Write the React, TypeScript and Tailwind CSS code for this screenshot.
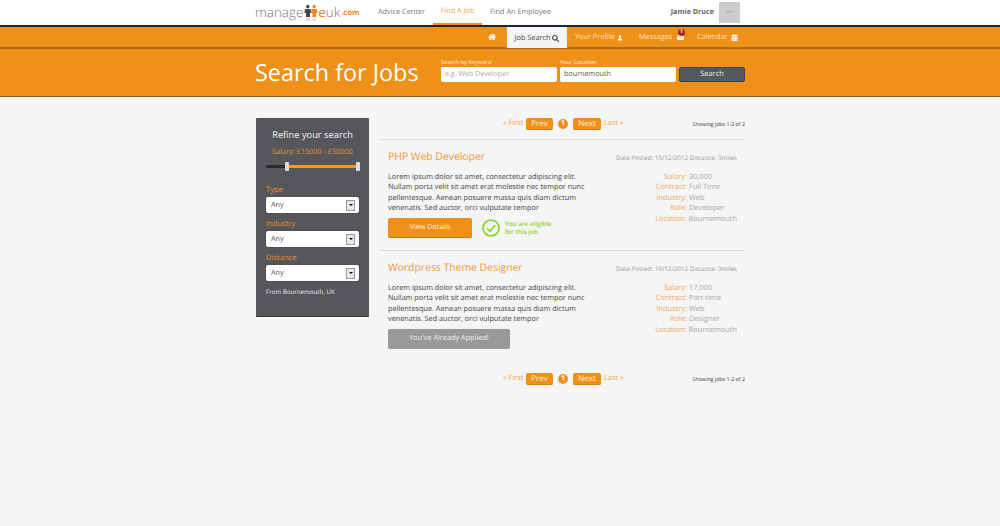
import React from "react";
import { FaHome, FaSearch, FaUser, FaCalendarAlt } from "react-icons/fa";

function Pager({ className }: { className: string }) {
  return (
    <div className={`relative flex h-[16px] items-center ${className}`}>
      <div className="ml-[123px] flex items-center">
        <span className="w-[20px] -translate-y-[0.5px] whitespace-nowrap text-[7.4px] text-[#f0a040]">« First</span>
        <span className="ml-[3px] flex h-[12px] w-[27px] items-center justify-center rounded-[2px] border-b border-[#d97c10] bg-[#f0901a] text-[8px] text-[#fff0dc]">Prev</span>
        <span className="ml-[5px] flex h-[10px] w-[10px] items-center justify-center rounded-full bg-[#f0901a] text-[7px] font-bold text-white">1</span>
        <span className="ml-[5px] flex h-[12px] w-[28px] items-center justify-center rounded-[2px] border-b border-[#d97c10] bg-[#f0901a] text-[8px] text-[#fff0dc]">Next</span>
        <span className="ml-[3px] -translate-y-[0.5px] whitespace-nowrap text-[7.4px] text-[#f0a040]">Last »</span>
      </div>
      <span className="absolute right-0 top-[4.5px] text-[5.3px] text-[#333]">Showing jobs 1-2 of 2</span>
    </div>
  );
}

function Sel({ label }: { label: string }) {
  return (
    <div>
      <div className="h-[14px] text-[7.6px] leading-[17px] text-[#e8902c]">{label}</div>
      <div className="mt-[1px] flex h-[16px] items-center justify-between rounded-[2px] bg-white pl-[5px] pr-[4px] shadow-[0_0_1px_#222]">
        <span className="text-[7.3px] text-[#555]">Any</span>
        <span className="flex h-[11px] w-[9px] items-center justify-center border border-[#999] bg-[#e8e8e8]">
          <span className="h-0 w-0 border-x-[2px] border-t-[2px] border-x-transparent border-t-black" />
        </span>
      </div>
    </div>
  );
}

function Job({ title, salary, contract, role, action }: { title: string; salary: string; contract: string; role: string; action: React.ReactNode }) {
  const rows = [["Salary:", salary], ["Contract:", contract], ["Industry:", "Web"], ["Role:", role], ["Location:", "Bournemouth"]];
  return (
    <div className="h-[111px] border-t border-[#dedede] px-[8px] pt-[10px]">
      <div className="flex items-center justify-between">
        <span className="text-[10.4px] leading-[15px] text-[#f0963a]">{title}</span>
        <span className="text-[6.25px] text-[#999]">Date Posted: 10/12/2012 Distance: 3miles</span>
      </div>
      <div className="mt-[7px] flex justify-between">
        <div className="w-[210px]">
          <p className="whitespace-nowrap text-[7.3px] leading-[10.45px] text-[#444]">
            Lorem ipsum dolor sit amet, consectetur adipiscing elit.<br />Nullam porta velit sit amet erat molestie nec tempor nunc<br />pellentesque. Aenean posuere massa quis diam dictum<br />venenatis. Sed auctor, orci vulputate tempor
          </p>
          <div className="mt-[4px]">{action}</div>
        </div>
        <div className="w-[120px] shrink-0">
          {rows.map(([k, v]) => (
            <div key={k} className="flex h-[10.45px] items-center text-[7.4px] leading-[10.45px]">
              <span className="mr-[2px] w-[70px] text-right text-[#f0a860]">{k}</span>
              <span className="text-[#aaa]">{v}</span>
            </div>
          ))}
        </div>
      </div>
    </div>
  );
}

export default function App() {
  return (
    <div className="min-h-[526px] bg-[#f5f5f5] [text-rendering:geometricPrecision]" style={{ fontFamily: `"Open Sans", sans-serif` }}>
      <header className="bg-white">
        <div className="mx-auto flex h-[25px] w-[490px] items-center">
          <div className="flex w-[106px] shrink-0 items-center text-[13.4px] font-light leading-none text-[#777]">
            manage
            <svg width="14" height="17" viewBox="0 0 14 17" className="ml-[1px] shrink-0">
              <circle cx="3.8" cy="2.5" r="1.7" fill="#444" />
              <path d="M1 5h5.5l0.5 4H6v4H2V9H0.5z" fill="#444" />
              <circle cx="10.2" cy="2.5" r="1.7" fill="#e8861a" />
              <path d="M7.5 5H13l0.5 4H12v4H8.5V9H7z" fill="#e8861a" />
              <path d="M2 14h4v3H2zM8.5 14H12v3H8.5z" fill="#ddd" />
            </svg>
            <span className="font-normal text-[#e8861a]">e</span>
            <span>uk</span>
            <span className="ml-[1px] mt-[2px] text-[7.6px] font-bold text-[#e8861a]">.com</span>
          </div>
          <nav className="ml-[17px] flex items-center whitespace-nowrap text-[7.3px]">
            <span className="w-[55px] text-[#777]">Advice Center</span>
            <span className="flex h-[25px] w-[49px] items-center justify-center border-b-2 border-[#ef9019] text-[#f0a860]">Find A Job</span>
            <span className="ml-[8px] text-[#777]">Find An Employee</span>
          </nav>
          <div className="ml-auto flex items-center">
            <span className="text-[7.2px] font-bold text-[#666]">Jamie Druce</span>
            <div className="ml-[5px] mr-[5px] flex h-[21px] w-[21px] items-center justify-center bg-[#ccc] text-[4px] text-[#999]">N/A</div>
          </div>
        </div>
      </header>
      <div className="h-[2px] bg-[#1d2430]" />
      <div className="h-[22px] border-b-2 border-[#b06f1c] bg-[#ef9019]">
        <div className="mx-auto flex h-[20px] w-[490px] items-center whitespace-nowrap pl-[233px] text-[7.3px] text-[#ffe3bf]">
          <FaHome size={8} color="white" className="shrink-0" />
          <span className="ml-[11px] flex h-[21px] w-[60px] shrink-0 items-center justify-center gap-[2px] self-start bg-[#f5f5f5] pt-[1px] text-[#444]">Job Search <FaSearch size={7} /></span>
          <span className="ml-[8px] flex w-[47px] shrink-0 items-center gap-[3px] pt-[1px]">Your Profile <FaUser size={6} color="white" /></span>
          <span className="relative ml-[17px] flex w-[46px] shrink-0 items-center gap-[5px] pt-[1px]">Messages
            <svg width="7" height="5" viewBox="0 0 8 6"><rect width="8" height="6" rx="1" fill="white" /><path d="M0 1l4 2.5L8 1" fill="none" stroke="#ef9019" strokeWidth="0.8" /></svg>
            <span className="absolute right-0 -top-[2px] flex h-[7px] w-[7px] items-center justify-center rounded-full bg-[#a8242c] text-[5px] font-bold text-white">1</span>
          </span>
          <span className="ml-[12px] flex shrink-0 items-center gap-[3px] pt-[1px]">Calendar <FaCalendarAlt size={7} color="white" /></span>
        </div>
      </div>
      <section className="h-[48px] border-b border-[#8a5a18] bg-[#ef9019]">
        <div className="mx-auto flex h-[47px] w-[490px]">
          <h1 className="mt-[8px] w-[186px] shrink-0 text-[23.4px] leading-[30px] text-white">Search for Jobs</h1>
          <div className="mt-[9px] w-[116px]">
            <div className="h-[9px] text-[5.7px] leading-[9px] text-[#fff0dc]">Search by Keyword</div>
            <div className="flex h-[15px] items-center rounded-[2px] bg-white pl-[4px] text-[7.1px] text-[#aaa]">e.g. Web Developer</div>
          </div>
          <div className="ml-[3px] mt-[9px] w-[116px]">
            <div className="h-[9px] text-[5.7px] leading-[9px] text-[#fff0dc]">Your Location</div>
            <div className="flex h-[15px] items-center rounded-[2px] bg-white pl-[4px] text-[7.2px] text-[#555]">bournemouth</div>
          </div>
          <div className="ml-[3px] mt-[18px] flex h-[15px] w-[66px] items-center justify-center rounded-[2px] border border-[#3e4044] bg-[#55585f] text-[7.4px] text-[#eee]">Search</div>
        </div>
      </section>
      <main className="mx-auto flex w-[490px] pt-[21px]">
        <aside className="ml-[1px] h-[199px] w-[113px] shrink-0 rounded-[1px] border-b border-[#333] bg-[#54565a] px-[10px] pt-[9px] [background-image:repeating-linear-gradient(90deg,#ffffff07_0_1px,transparent_1px_2px),repeating-linear-gradient(0deg,#0000000a_0_1px,transparent_1px_2px)]">
          <div className="text-center text-[9.3px] leading-[16px] text-[#f4f4f4]">Refine your search</div>
          <div className="mt-[3px] text-center text-[7.3px] leading-[12px] text-[#e0902e]">Salary: £15000 - £50000</div>
          <div className="relative mt-[7px] h-[3px] rounded-full bg-[#2a2a2a]">
            <div className="absolute left-[20px] right-0 h-[3px] bg-[#f7981c]" />
            <span className="absolute left-[19px] -top-[3px] h-[9px] w-[4px] rounded-[1px] bg-[#ddd]" />
            <span className="absolute -right-[1px] -top-[3px] h-[9px] w-[4px] rounded-[1px] bg-[#ddd]" />
          </div>
          <div className="mt-[14px] flex flex-col gap-[3px]">
            <Sel label="Type" />
            <Sel label="Industry" />
            <Sel label="Distance" />
          </div>
          <div className="mt-[6px] text-[6.2px] text-[#eee]">From Bournemouth, UK</div>
        </aside>
        <div className="ml-[11px] flex-1">
          <Pager className="-mt-[2px]" />
          <div className="mt-[7px]">
            <Job title="PHP Web Developer" salary="30,000" contract="Full Time" role="Developer"
              action={
                <div className="flex items-center">
                  <span className="flex h-[20px] w-[84px] items-center justify-center rounded-[2px] border-b border-[#c77a14] bg-[#ef9019] text-[7.2px] text-[#fff0dc]">View Details</span>
                  <svg width="18" height="18" viewBox="0 0 18 18" className="ml-[10px]"><circle cx="9" cy="9" r="8" fill="none" stroke="#7ed321" strokeWidth="1.6" /><path d="M5 9.3l3 3 5-6" fill="none" stroke="#7ed321" strokeWidth="1.6" /></svg>
                  <span className="ml-[5px] text-[6.3px] font-semibold leading-[8px] text-[#8fd32a]">You are eligible<br />for this job</span>
                </div>
              }
            />
            <Job title="Wordpress Theme Designer" salary="17,000" contract="Part-time" role="Designer"
              action={<span className="flex h-[20px] w-[122px] items-center justify-center rounded-[2px] bg-[#999] text-[7.3px] text-[#f0f0f0]">You've Already Applied!</span>}
            />
          </div>
          <Pager className="mt-[10px]" />
        </div>
      </main>
    </div>
  );
}
